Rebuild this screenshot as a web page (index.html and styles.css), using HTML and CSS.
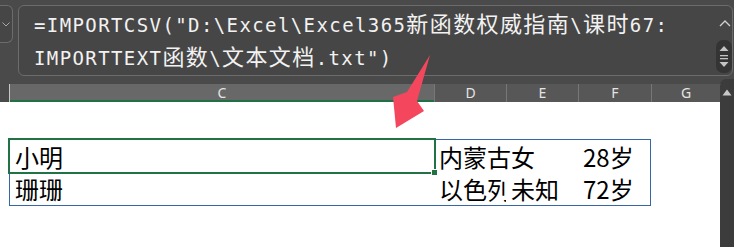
FILE: index.html
```html
<!DOCTYPE html>
<html>
<head>
<meta charset="utf-8">
<link rel="stylesheet" href="styles.css">
</head>
<body>
<div class="app">
  <div class="top">
    <div class="namebox">
      <svg class="nb-chev" width="8" height="5" viewBox="0 0 8 5"><polyline points="0.5,0.5 4,4 7.5,0.5" fill="none" stroke="#a8a8a8" stroke-width="1"/></svg>
    </div>
    <div class="fbox">
      <div class="ftext">=IMPORTCSV("D:\Excel\Excel365<span class="cj">新函数权威指南</span>\<span class="cj">课时</span>67:<br>IMPORTTEXT<span class="cj">函数</span>\<span class="cj">文本文档</span>.txt")</div>
      <div class="fctl">
        <svg class="up" width="12" height="7" viewBox="0 0 12 7"><polyline points="1,6 6,1 11,6" fill="none" stroke="#cfcfcf" stroke-width="1.4"/></svg>
        <svg class="spin" width="16" height="33" viewBox="0 0 16 33">
          <rect x="0" y="0" width="16" height="33" rx="7" fill="#343434"/>
          <polygon points="8,6 12.5,11 3.5,11" fill="#c4c4c4"/>
          <rect x="4" y="15" width="8" height="1.3" fill="#c4c4c4"/>
          <rect x="4" y="18" width="8" height="1.3" fill="#c4c4c4"/>
          <polygon points="3.5,22 12.5,22 8,27" fill="#c4c4c4"/>
        </svg>
      </div>
    </div>
  </div>
  <div class="body">
    <div class="main">
      <div class="colhdr">
        <div class="corner"></div>
        <div class="ch sel">C</div>
        <div class="ch w72">D</div>
        <div class="ch w72">E</div>
        <div class="ch w73">F</div>
        <div class="ch wg">G</div>
      </div>
      <div class="sheet">
        <div class="range">
          <div class="cell active">小明</div>
          <div class="cell">内蒙古</div>
          <div class="cell">女</div>
          <div class="cell">28岁</div>
          <div class="cell r2">珊珊</div>
          <div class="cell r2 clip">以色列</div>
          <div class="cell r2">未知</div>
          <div class="cell r2">72岁</div>
        </div>
      </div>
    </div>
    <div class="vscroll">
      <svg width="10" height="7" viewBox="0 0 10 7"><polygon points="5,0.5 9.5,6.5 0.5,6.5" fill="#c8c8c8"/></svg>
    </div>
  </div>
  <svg class="arrow" width="734" height="247" viewBox="0 0 734 247">
    <polygon points="430,55 417,101 424,111 396,128 393,97 407,92" fill="#f4475d"/>
  </svg>
</div>
</body>
</html>
```

FILE: styles.css
```css
html, body {
  margin: 0;
  padding: 0;
  background: #ffffff;
}
.app {
  position: relative;
  width: 734px;
  height: 247px;
  overflow: hidden;
  font-family: "Noto Sans", "Noto Sans CJK SC", sans-serif;
}
.top {
  height: 84px;
  background: #4a4a4a;
  display: flex;
  align-items: flex-start;
  box-sizing: border-box;
  padding-top: 5px;
}
.namebox {
  width: 13px;
  height: 38px;
  box-sizing: border-box;
  border: 1px solid #6c6c6c;
  border-left: none;
  border-radius: 0 6px 6px 0;
  background: #464646;
  display: flex;
  align-items: center;
  justify-content: center;
  padding-right: 1px;
}
.nb-chev {
  display: block;
  margin-top: 1px;
}
.fbox {
  margin-left: 5px;
  width: 715px;
  height: 71px;
  box-sizing: border-box;
  border: 1px solid #6c6c6c;
  border-radius: 6px;
  background: #464646;
  display: flex;
}
.ftext {
  flex: 1;
  padding: 3px 0 0 15px;
  font-family: "DejaVu Sans Mono", "Noto Sans CJK SC", monospace;
  font-size: 19px;
  letter-spacing: 1.4px;
  line-height: 33px;
  color: #f2f2f2;
  white-space: nowrap;
}
.cj {
  font-family: "Noto Sans CJK SC", sans-serif;
  font-size: 22px;
  line-height: 0;
}
.fctl {
  width: 16px;
  display: flex;
  flex-direction: column;
  align-items: center;
}
.up {
  display: block;
  margin-top: 14px;
  margin-left: 1px;
}
.spin {
  display: block;
  margin-top: 13px;
}
.body {
  display: flex;
  height: 163px;
}
.main {
  width: 720px;
  display: flex;
  flex-direction: column;
}
.colhdr {
  display: flex;
  height: 18px;
  background: #575757;
}
.corner {
  width: 9px;
  background: #4a4a4a;
}
.ch {
  box-sizing: border-box;
  border-left: 1px solid #777777;
  color: #e4e4e4;
  font-size: 14px;
  line-height: 18px;
  text-align: center;
}
.ch.sel {
  width: 425px;
  background: #686868;
  border-left: 1px solid #c8c8c8;
  box-shadow: inset 0 -2px 0 #1f7145;
}
.w72 { width: 72px; }
.w73 { width: 73px; }
.wg { width: 69px; }
.sheet {
  flex: 1;
  background: #ffffff;
  padding: 37px 0 0 9px;
}
.range {
  width: 642px;
  box-sizing: border-box;
  border: 1px solid #3566a6;
  display: grid;
  grid-template-columns: 424px 72px 72px 72px;
  grid-template-rows: 33px 32px;
}
.cell {
  position: relative;
  padding-left: 5px;
  font-family: "Noto Sans CJK SC", sans-serif;
  font-size: 24px;
  line-height: 33px;
  color: #000000;
  white-space: nowrap;
}
.cell.r2 {
  line-height: 32px;
}
.cell.clip {
  overflow: hidden;
}
.cell.active::after {
  content: "";
  position: absolute;
  top: -2px;
  left: -2px;
  right: -2px;
  bottom: -1px;
  border: 2px solid #217346;
}
.cell.active::before {
  content: "";
  position: absolute;
  right: -4px;
  bottom: -3px;
  width: 5px;
  height: 5px;
  background: #217346;
  border: 1px solid #ffffff;
  z-index: 1;
}
.vscroll {
  width: 14px;
  margin-top: -5px;
  background: #3c3c3c;
  border-radius: 6px 0 0 0;
  display: flex;
  justify-content: center;
  align-items: flex-start;
  padding-top: 10px;
  box-sizing: border-box;
}
.vscroll svg {
  display: block;
}
.arrow {
  position: absolute;
  left: 0;
  top: 0;
  pointer-events: none;
}
```
